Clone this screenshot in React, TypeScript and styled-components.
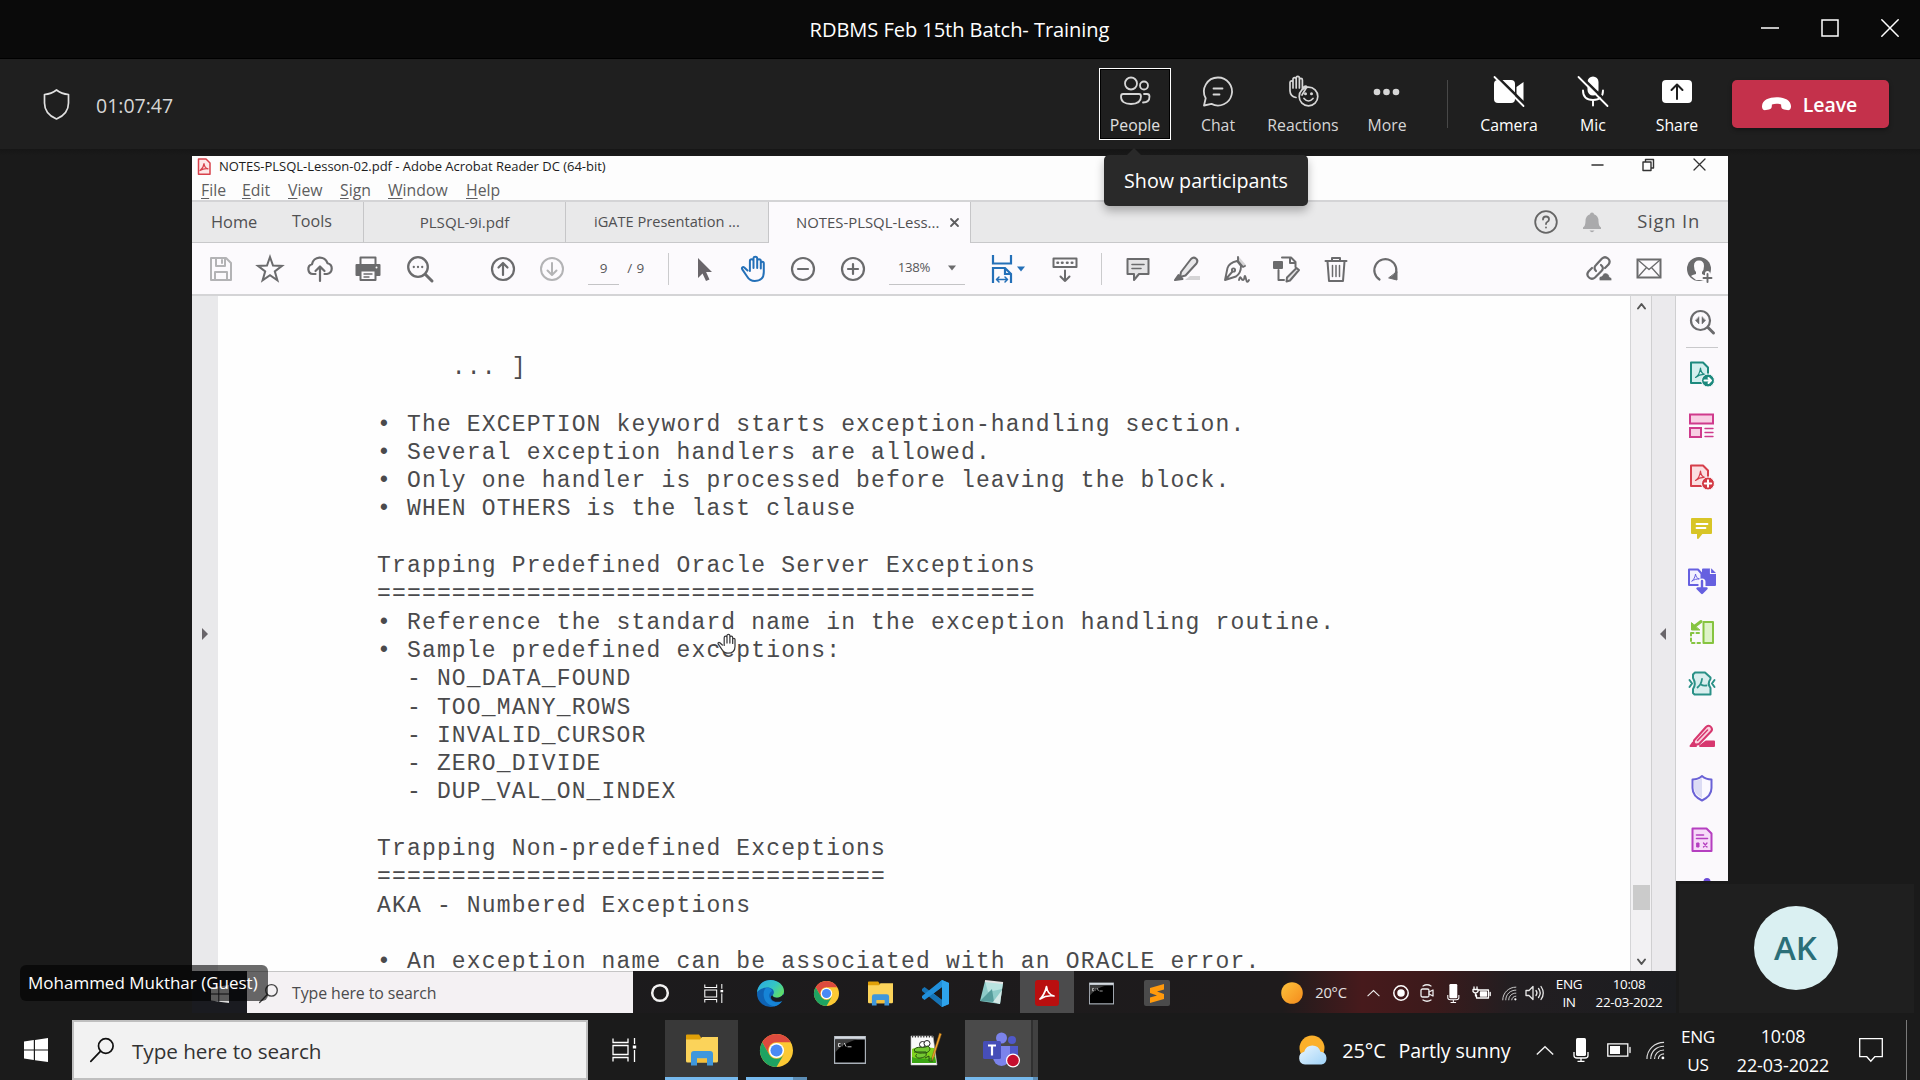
import React from "react";
import styled, { createGlobalStyle } from "styled-components";

const Global = createGlobalStyle`
  * { box-sizing: border-box; }
  html, body { margin: 0; padding: 0; background: #1a1a1a; overflow: hidden; }
  body { font-family: "Open Sans", "Noto Sans", sans-serif; }
  svg { display: block; flex: none; overflow: visible; }
`;

const Screen = styled.div`
  position: relative;
  width: 1920px;
  height: 1080px;
  display: flex;
  flex-direction: column;
  background: #1a1a1a;
  overflow: hidden;
`;

const Txt = styled.span<{ $s: number; $c?: string; $ls?: number; $w?: number }>`
  font-size: ${(p) => p.$s}px;
  color: ${(p) => p.$c || "#fff"};
  letter-spacing: ${(p) => p.$ls || 0}px;
  font-weight: ${(p) => p.$w || 400};
  line-height: 1.2;
  white-space: pre;
`;

/* ---------- Meeting window ---------- */

const TitleBar = styled.header`
  flex: none;
  height: 59px;
  display: grid;
  grid-template-columns: 1fr auto 1fr;
  align-items: center;
  background: #0a0a0a;
  border-bottom: 1px solid #000;
  padding: 3px 21px 0 20px;
`;

const WindowButtons = styled.div`
  grid-column: 3;
  justify-self: end;
  display: flex;
  gap: 42px;
  margin-top: -6px;
`;

const MeetingBar = styled.div`
  flex: none;
  height: 90px;
  display: flex;
  align-items: center;
  background: #1f1f1f;
  padding: 0 31px 0 43px;
`;

const Timer = styled.div`
  display: flex;
  align-items: center;
  gap: 26px;
  flex: 1;
  span { padding-top: 3px; }
`;

const Action = styled.button<{ $w: number; $focus?: boolean }>`
  width: ${(p) => p.$w}px;
  height: 72px;
  display: flex;
  flex-direction: column;
  align-items: center;
  padding: ${(p) => (p.$focus ? "6px 0 0" : "7px 0 0")};
  gap: 9px;
  background: transparent;
  font-family: inherit;
  border: ${(p) => (p.$focus ? "1px solid #fff" : "0")};
  box-shadow: ${(p) => (p.$focus ? "inset 0 0 0 1px #000" : "none")};
`;

const BarDivider = styled.i`
  width: 1px;
  height: 48px;
  margin: 0 19px 0 14px;
  background: #484848;
`;

const LeaveButton = styled.button`
  width: 157px;
  height: 48px;
  margin-left: 13px;
  display: flex;
  align-items: center;
  justify-content: center;
  gap: 11px;
  padding: 0 3px 0 0;
  border: 0;
  border-radius: 5px;
  background: #c4314b;
  font-family: inherit;
  box-shadow: 0 2px 4px rgba(0, 0, 0, 0.35);
  span { padding-top: 2px; }
`;

const Tooltip = styled.div`
  position: absolute;
  left: 1104px;
  top: 155px;
  width: 204px;
  height: 51px;
  display: flex;
  align-items: center;
  justify-content: center;
  background: #292929;
  border-radius: 5px;
  box-shadow: 0 5px 10px rgba(0, 0, 0, 0.28);
  &::before {
    content: "";
    position: absolute;
    left: 23px;
    top: -7px;
    border: 7px solid transparent;
    border-top: 0;
    border-bottom-color: #292929;
  }
`;

const Stage = styled.main`
  flex: none;
  height: 871px;
  padding: 7px 192px 7px;
  background: linear-gradient(#161616, #1a1a1a 7px);
`;

const Shared = styled.section`
  width: 1536px;
  height: 857px;
  display: flex;
  flex-direction: column;
  background: #fdfdfd;
  overflow: hidden;
`;

const NameTag = styled.div`
  position: absolute;
  left: 20px;
  top: 965px;
  width: 248px;
  height: 36px;
  display: flex;
  align-items: center;
  padding-left: 8px;
  border-radius: 6px;
  background: rgba(0, 0, 0, 0.58);
`;

const SelfView = styled.aside`
  position: absolute;
  left: 1676px;
  top: 881px;
  width: 241px;
  height: 132px;
  padding: 3px 3px 0;
  background: #1a1a1a;
`;

const SelfTile = styled.div`
  height: 129px;
  display: flex;
  align-items: center;
  justify-content: center;
  padding: 0 2px 2px 0;
  background: #1f1f1f;
`;

const Avatar = styled.div`
  width: 84px;
  height: 84px;
  border-radius: 50%;
  display: flex;
  align-items: center;
  justify-content: center;
  background: #daf0f2;
`;

/* ---------- Acrobat window ---------- */

const AcroTitle = styled.div`
  flex: none;
  height: 22px;
  display: flex;
  align-items: center;
  padding: 0 22px 1px 5px;
  gap: 8px;
`;

const AcroWinButtons = styled.div`
  margin-left: auto;
  display: flex;
  align-items: center;
  gap: 38px;
  margin-top: -4px;
`;

const MenuBar = styled.nav`
  flex: none;
  height: 24px;
  display: flex;
  align-items: center;
  padding: 2px 0 0 9px;
  border-bottom: 2px solid #d4d4d6;
  margin-bottom: 0;
`;

const MenuItem = styled.span<{ $w: number }>`
  width: ${(p) => p.$w}px;
  font-size: 15.8px;
  color: #5e5e60;
  line-height: 20px;
  &::first-letter { text-decoration: underline; text-underline-offset: 2px; }
`;

const TabStrip = styled.div`
  flex: none;
  height: 41px;
  display: flex;
  background: #e9e9ea;
`;

const Tab = styled.div<{ $w: number; $active?: boolean; $pad?: number; $plain?: boolean }>`
  width: ${(p) => p.$w}px;
  display: flex;
  align-items: center;
  justify-content: ${(p) => (p.$pad !== undefined ? "flex-start" : "center")};
  padding-left: ${(p) => p.$pad || 0}px;
  background: ${(p) => (p.$active ? "#fcfafd" : "transparent")};
  border-right: ${(p) => (p.$plain ? "0" : "1px solid #c6c6c8")};
  border-bottom: ${(p) => (p.$active ? "0" : "1px solid #c8c8ca")};
`;

const TabFill = styled.div`
  flex: 1;
  display: flex;
  align-items: center;
  justify-content: flex-end;
  padding: 0 28px 1px 0;
  border-bottom: 1px solid #c8c8ca;
`;

const SignIn = styled(Txt)`
  margin-left: 31px;
`;

const ToolBar = styled.div`
  flex: none;
  height: 53px;
  display: flex;
  align-items: center;
  background: #fcfafd;
  border-bottom: 2px solid #d4d4d6;
`;

const Tool = styled.span<{ $ml: number; $w?: number }>`
  flex: none;
  width: ${(p) => p.$w || 28}px;
  height: 28px;
  margin-left: ${(p) => p.$ml}px;
  display: flex;
  align-items: center;
  justify-content: center;
`;

const Field = styled.span<{ $ml: number; $w: number }>`
  flex: none;
  width: ${(p) => p.$w}px;
  height: 32px;
  margin-left: ${(p) => p.$ml}px;
  display: flex;
  align-items: center;
  justify-content: center;
  gap: 18px;
  border-bottom: 1px solid #c4c4c6;
`;

const ToolDivider = styled.i<{ $ml: number }>`
  flex: none;
  width: 1px;
  height: 32px;
  margin-left: ${(p) => p.$ml}px;
  background: #cbcbcd;
`;

const Body = styled.div`
  flex: 1;
  min-height: 0;
  display: flex;
`;

const LeftRail = styled.div`
  width: 26px;
  display: flex;
  align-items: center;
  justify-content: center;
  background: #e9e9eb;
`;

const Page = styled.div`
  position: relative;
  flex: 1;
  background: #fefefe;
  padding: 58px 0 0 159px;
  overflow: hidden;
`;

const Line = styled.div`
  height: 28.3px;
  line-height: 28.3px;
  white-space: pre;
  font-family: "Liberation Mono", monospace;
  font-size: 23px;
  letter-spacing: 1.17px;
  color: #4a4a4c;
  &:last-of-type { height: 28px; }
`;

const LastLine = styled(Line)`
  height: 20px;
  line-height: 20px;
  margin-top: 4px;
  &:last-of-type { height: 20px; }
`;

const HandCursor = styled.aside`
  position: absolute;
  left: 499px;
  top: 337px;
`;

const ScrollBar = styled.div`
  width: 22px;
  display: flex;
  flex-direction: column;
  align-items: center;
  padding: 6px 0 5px;
  background: #f2f1f3;
  border-left: 1px solid #d5d5d7;
  border-right: 1px solid #cfcfd1;
`;

const Thumb = styled.i`
  width: 17px;
  height: 25px;
  margin-top: auto;
  margin-bottom: 48px;
  background: #cbcbcb;
`;

const RightRail = styled.div`
  width: 24px;
  display: flex;
  align-items: center;
  justify-content: center;
  padding-right: 2px;
  background: #ebeaed;
  border-right: 1px solid #cfcfd1;
`;

const SidePane = styled.div`
  width: 52px;
  display: flex;
  flex-direction: column;
  align-items: center;
  background: #fbf9fc;
`;

const SideCell = styled.div<{ $first?: boolean }>`
  flex: none;
  width: 32px;
  height: ${(p) => (p.$first ? 52 : 51.75)}px;
  display: flex;
  align-items: center;
  justify-content: center;
  border-bottom: ${(p) => (p.$first ? "1px solid #c9c9cb" : "0")};
`;

/* ---------- Task bars ---------- */

const InnerBar = styled.div`
  flex: none;
  height: 42px;
  display: flex;
  align-items: center;
  background: linear-gradient(90deg, #1b1b1d 0, #1e1b1c 1090px, #471a1c 1170px, #3c1a1b 1240px, #221e21 1320px, #1c1d20 1484px);
  & > div + div { padding-top: 2px; }
`;

const InnerStart = styled.div`
  width: 55px;
  height: 42px;
  padding: 14px 0 0 19px;
  background: #1a1b20;
`;

const InnerSearch = styled.div`
  width: 386px;
  height: 42px;
  display: flex;
  align-items: center;
  gap: 14px;
  padding-left: 12px;
  background: #f4f1f3;
  border-top: 1px solid #c5c5c5;
`;

const Slot = styled.div<{ $w: number; $bg?: string; $ml?: number }>`
  position: relative;
  flex: none;
  width: ${(p) => p.$w}px;
  height: 100%;
  margin-left: ${(p) => p.$ml || 0}px;
  display: flex;
  align-items: center;
  justify-content: center;
  background: ${(p) => p.$bg || "transparent"};
`;

const Stack = styled(Slot)<{ $gap: number }>`
  flex-direction: column;
  gap: ${(p) => p.$gap}px;
`;

const TaskBar = styled.footer`
  flex: none;
  height: 60px;
  display: flex;
  align-items: center;
  background: #1b1b1b;
  span { padding-top: 2px; }
`;

const SearchBox = styled.div`
  width: 516px;
  height: 60px;
  display: flex;
  align-items: center;
  gap: 18px;
  padding-left: 16px;
  background: #f2f2f2;
  border: 2px solid #bfbfbf;
`;

const Underline = styled.i<{ $dim?: number }>`
  position: absolute;
  left: 0;
  right: 0;
  bottom: 0;
  height: 3px;
  background: linear-gradient(90deg, #76b9ed calc(100% - ${(p) => p.$dim || 0}px), #5c8db5 0);
`;

const EdgeLine = styled.i`
  width: 1px;
  height: 60px;
  background: #7a7a7a;
`;

/* ---------- Icons ---------- */

type IcoProps = { w?: number; h?: number; vb?: string; c?: string; sw?: number; fill?: string; children: React.ReactNode };
const Ico = ({ w = 28, h, vb, c = "#6b6b6d", sw = 2, fill = "none", children }: IcoProps) => (
  <svg width={w} height={h ?? w} viewBox={vb ?? `0 0 ${w} ${h ?? w}`} fill={fill} stroke={c} strokeWidth={sw} strokeLinejoin="round" strokeLinecap="round">
    {children}
  </svg>
);

const WinLogo = ({ w, c = "#fff" }: { w: number; c?: string }) => (
  <svg width={w} height={w} viewBox="0 0 24 24" fill={c}>
    <path d="M0 3.4 9.8 2v9.4H0zM11 1.9 24 0v11.4H11zM0 12.5h9.8V22L0 20.6zM11 12.5h13V24l-13-1.8z" />
  </svg>
);

const Magnifier = ({ w, c }: { w: number; c: string }) => (
  <Ico w={w} vb="0 0 24 24" c={c} sw={1.7}>
    <circle cx="15.8" cy="8" r="7.3" />
    <path d="M10.6 13.2 0.8 23.4" />
  </Ico>
);

const TaskView = ({ w }: { w: number }) => (
  <svg width={w} height={w} viewBox="0 0 24 24" fill="none" stroke="#fff" strokeWidth="1.3">
    <path d="M1 0.5v4h15v-4M1 23.5v-4h15v4M1 7.5h15v9H1zM22.5 0v6M22.5 12v12" />
    <path d="M20.8 7.5h3.4v3h-3.4z" fill="#fff" stroke="none" />
  </svg>
);

const Folder = ({ w }: { w: number }) => (
  <svg width={w} height={w} viewBox="0 0 32 32">
    <path d="M0 1.5a1 1 0 0 1 1-1h12l2 3v6H0z" fill="#e0a008" />
    <path d="M0 5.5h14l2-2.5h16v24a1.5 1.5 0 0 1-1.5 1.5h-29A1.5 1.5 0 0 1 0 27z" fill="#fbd35a" />
    <path d="M5 31.500V20a3 3 0 0 1 3-3h16a3 3 0 0 1 3 3V31.500h-6v-7H11v7z" fill="#3f97dc" />
    <path d="M11 24.500h10v4H11z" fill="#f5bf3a" />
  </svg>
);

const Chrome = ({ w }: { w: number }) => (
  <svg width={w} height={w} viewBox="0 0 48 48">
    <circle cx="24" cy="24" r="24" fill="#fcc934" />
    <path d="M3.200 12A24 24 0 0 1 44.800 12H24a12 12 0 0 0-10.400 18z" fill="#dd4b3e" />
    <path d="M3.200 12A24 24 0 0 0 24 48L34.400 30a12 12 0 0 1-20.800 0z" fill="#1ea362" />
    <circle cx="24" cy="24" r="11" fill="#fff" />
    <circle cx="24" cy="24" r="8.800" fill="#4a8af4" />
  </svg>
);

const Terminal = ({ w }: { w: number }) => (
  <svg width={w} height={w} viewBox="0 0 32 32">
    <path d="M0 2h32v28H0z" fill="#a9b0b8" />
    <path d="M1.200 5.500h29.600v23H1.200z" fill="#000" />
    <path d="M1.200 5.500h22c-9 2-16 6-22 13z" fill="#3c3c3c" />
    <path d="M1 2.500h30v2H1z" fill="#d5dae0" />
    <path d="M6.500 9.500h-2v3h2M8.300 9.800v.5M8.300 11.700v.5M10.300 9l1.800 3.600M13.500 12.800h4" stroke="#ddd" strokeWidth=".9" fill="none" />
  </svg>
);

const Edge = () => (
  <svg width="27" height="27" viewBox="0 0 32 32">
    <defs>
      <linearGradient id="eg1" x1="0" y1="0" x2="1" y2=".6"><stop offset="0" stopColor="#2ba7e8" /><stop offset=".6" stopColor="#34c6c4" /><stop offset="1" stopColor="#5fdd6b" /></linearGradient>
    </defs>
    <circle cx="16" cy="16" r="16" fill="#0f63b4" />
    <path d="M0 15C1 5 8 0 16 0c9 0 16 6 16 13 0 5-4 8-8.500 8-3 0-5-1-5-2.500 0-1 1.500-1.500 1.500-4C20 11 16 9 12 9 6 9 1 12 0 15z" fill="url(#eg1)" />
    <path d="M12 9c-7 2-6 21 9 22 4-.5 7-3 9-6-4 2-10 2-13-1-4-4-3-9 1-11-1-2-3-4-6-4z" fill="#1684d6" />
    <path d="M18.500 18.500c0 1.500 2 2.500 5 2.500 3 0 6-1.500 7.500-4l1.500 1.500c0 3-1.500 4.500-2.500 6-5 2.500-11 1.500-13-2-1-2-.5-4 1.500-4z" fill="#1a1c20" />
  </svg>
);

const VSCode = () => (
  <svg width="28" height="27" viewBox="0 0 28 27">
    <path d="M20 0l7 3v21l-7 3L5 13.500z" fill="#1f8ad2" />
    <path d="M20 7v13l-8.500-6.500z" fill="#1b1b1d" />
    <path d="M20 0l7 3v21l-7 3z" fill="#2ea3ec" />
    <path d="M0 9l2.500-2L20 20v7L0 11z" fill="#1673b5" />
    <path d="M0 18l2.500 2L20 7V0L0 16z" fill="#2190dc" />
  </svg>
);

const NotepadSm = () => (
  <svg width="26" height="26" viewBox="0 0 26 26">
    <path d="M7 1l18 2-3 21-20-3z" fill="#8ecbc8" />
    <path d="M7 1l18 2-1 6-14 3z" fill="#b9e3e0" />
    <path d="M2 21l12-12 2 13z" fill="#569d9c" />
    <path d="M7 1l18 2" stroke="#e4e4e4" strokeWidth="2" />
    <path d="M15 22l7 2 2-14z" fill="#d3e8e6" />
  </svg>
);

const AcrobatApp = () => (
  <svg width="24" height="26" viewBox="0 0 24 26">
    <rect width="24" height="26" rx="3" fill="#b90f0f" />
    <path d="M5 19c2-1.500 5.500-7 6.500-12.500 .5 5 3.500 8.500 7.500 9.500-5.500-.8-10 .5-14 3z" fill="none" stroke="#fff" strokeWidth="1.700" strokeLinejoin="round" />
  </svg>
);

const Sublime = () => (
  <svg width="26" height="26" viewBox="0 0 26 26">
    <rect width="26" height="26" rx="2" fill="#4b4b4b" />
    <path d="M6 8l14-4v5.500l-7 2 7 2.500v5L6 23v-5.500l7-2-7-2.500z" fill="#ff9a0c" />
  </svg>
);

const NotepadPP = () => (
  <svg width="34" height="36" viewBox="0 0 34 34">
    <path d="M2 3h22l4 29H2z" fill="#fafafa" stroke="#bbb" strokeWidth=".6" />
    <path d="M3 16c8-3 16-1 22-1l2 14H3z" fill="#7fd21c" />
    <path d="M3 24c8 3 16 1 23 0l1 6H3z" fill="#3ba514" />
    <path d="M3 3.500h21" stroke="#333" strokeWidth="2" strokeDasharray="1.200 1.600" />
    <circle cx="13.500" cy="11.500" r="3" fill="#fff" stroke="#222" />
    <circle cx="18" cy="10.500" r="3" fill="#fff" stroke="#222" />
    <path d="M5 17c3-5 9-1 14-4 4 3 1 7-4 7-4 0-7 1-10-3zM8 21c-3 2 0 5 4 4s6-2 5-5M16 25l4-2v5h4M5 19h12" fill="#74c832" stroke="#244a10" />
    <path d="M32.500 1l-8 24-1.500 3 0-4L30.500 0z" fill="#f7a62b" stroke="#7a5318" strokeWidth=".5" />
  </svg>
);

const Teams = () => (
  <svg width="38" height="38" viewBox="0 0 38 36">
    <circle cx="29" cy="8" r="4" fill="#5059c9" />
    <path d="M24 14h11v10a6 6 0 0 1-11 3z" fill="#5059c9" />
    <circle cx="18.500" cy="6" r="5.500" fill="#7b83eb" />
    <path d="M10 14h17v11a8.500 9 0 0 1-17 0z" fill="#7b83eb" />
    <rect x="0" y="9" width="18" height="18" rx="1.500" fill="#464eb8" />
    <path d="M5 13.500h8M9 13.500v10" stroke="#fff" strokeWidth="2.200" />
    <circle cx="30" cy="28.500" r="7" fill="#fff" />
    <circle cx="30" cy="28.500" r="5.800" fill="#c50f2e" />
  </svg>
);

const Wifi = ({ w }: { w: number }) => (
  <svg width={w} height={w} viewBox="0 0 20 20" fill="none" stroke="#ddd" strokeWidth="1.200">
    <path d="M1 19C1 9 9 1.500 19 1.500M5 19C5 11 11 5.500 19 5.500M9 19c0-5.500 4-9.500 10-9.500M13 19c0-3 2.500-5.500 6-5.500" />
    <circle cx="17.800" cy="17.800" r="1.500" fill="#fff" stroke="none" />
  </svg>
);

const Chevron = ({ w }: { w: number }) => (
  <svg width={w} height={w / 2} viewBox="0 0 18 9" fill="none" stroke="#eee" strokeWidth="1.500">
    <path d="M.8 8.500 9 .8l8.200 7.700" />
  </svg>
);

const MicTray = ({ h }: { h: number }) => (
  <svg width={(h * 16) / 24} height={h} viewBox="0 0 16 24" fill="none" stroke="#fff" strokeWidth="1.300">
    <rect x="3" y="0" width="10" height="18" rx="1.500" fill="#fff" stroke="none" />
    <path d="M1 14v3.500q0 2.500 3 2.500h8q3 0 3-2.500V14M8 20v3M4.500 23.300h7" />
  </svg>
);

const PdfGlyph = ({ c }: { c: string }) => <path d="M7.500 17.500c2.500-1.500 4.500-5.500 5-9.500 .3 4 2 6 4.500 6.500-3.500-.4-6.500.6-9.500 3z" stroke={c} strokeWidth="1.200" fill="none" />;

const PhoneDown = () => (
  <svg width="31" height="14" viewBox="0 0 31 14" fill="#fff">
    <path d="M1 9C1.500 3 8 .3 15.500.3S29.500 3 30 9c.2 3-1.300 4.600-4 4.100l-3-.6c-1.800-.4-2.700-1.400-2.800-3.200l-.1-1.800c-3-1-6.200-1-9.200 0l-.1 1.800c-.1 1.800-1 2.800-2.800 3.200l-3 .6C2.300 13.600.8 12 1 9z" />
  </svg>
);

const HandPath = "M6.500 15.500 3.300 12.600c-1.500-1.400-3 .3-2 1.800l5 7.300c1.500 2.600 4 4.300 7.500 4.300 6 0 9-3.500 9-9V8.500c0-2.300-3-2.300-3 0V6c0-2.500-3.600-2.500-3.600 0V3.500c0-2.500-3.700-2.500-3.700 0V6c0-2.500-3.600-2.500-3.600 0v9M12.500 6v7M16.200 6v7M19.800 8.500v5M8.900 6v10";

const dim = "#b3b3b5";

const docLines = [
  "     ... ]",
  "",
  "• The EXCEPTION keyword starts exception-handling section.",
  "• Several exception handlers are allowed.",
  "• Only one handler is processed before leaving the block.",
  "• WHEN OTHERS is the last clause",
  "",
  "Trapping Predefined Oracle Server Exceptions",
  "============================================",
  "• Reference the standard name in the exception handling routine.",
  "• Sample predefined exceptions:",
  "  - NO_DATA_FOUND",
  "  - TOO_MANY_ROWS",
  "  - INVALID_CURSOR",
  "  - ZERO_DIVIDE",
  "  - DUP_VAL_ON_INDEX",
  "",
  "Trapping Non-predefined Exceptions",
  "==================================",
  "AKA - Numbered Exceptions",
  "",
];

const sideIcons: React.ReactNode[] = [
  <Ico c="#1d8a7e" key="export">
    <path d="M3 2.500h12l5 5V23H3z" fill="#d3efee" stroke="#1d8a7e" /><PdfGlyph c="#1d8a7e" />
    <circle cx="20" cy="20.500" r="6.500" fill="#1d8a7e" stroke="#fbf9fc" strokeWidth="1" /><path d="M16.500 20.500h6M20.500 18l2.500 2.500-2.500 2.500" stroke="#fff" />
  </Ico>,
  <Ico c="#cf3b8c" key="organize">
    <path d="M2 2.500h23v9H2zM2 16h11v9H2z" fill="#f8cfe4" strokeLinejoin="miter" /><path d="M17 16.500h8M17 20.500h8M17 24.500h8" strokeWidth="1.400" />
  </Ico>,
  <Ico c="#d63f4b" key="create">
    <path d="M3 2.500h12l5 5V23H3z" fill="#fbdfe1" /><PdfGlyph c="#d63f4b" />
    <circle cx="20" cy="20.500" r="6.500" fill="#d33a44" stroke="#fbf9fc" strokeWidth="1" /><path d="M16.800 20.500h6.400M20 17.300v6.400" stroke="#fff" />
  </Ico>,
  <Ico c="#d8c527" key="comment">
    <path d="M4 4h19v14H14l-4 5v-5H4z" fill="#d8c527" /><path d="M8.500 9h11M8.500 13h9" stroke="#fff" strokeWidth="1.800" />
  </Ico>,
  <Ico c="#6660e0" key="combine">
    <path d="M1 2.500h9l3.500 4V18H1z" fill="#f2f1ff" /><path d="M15 2.500h8l4 4V18H15z" fill="#6660e0" /><path d="M22.500 1.500v5h5" stroke="#fbf9fc" strokeWidth="1.200" />
    <path d="M4 14c2-1.500 3-4 3.500-7 .5 3 1.500 4.500 4 5-3-.2-5 .5-7.500 2z" strokeWidth="1" />
    <path d="M14 15v8" stroke="#fbf9fc" strokeWidth="7" /><path d="M14 14v9M9.500 21.500h9L14 26z" fill="#6660e0" strokeWidth="2.400" />
  </Ico>,
  <Ico c="#86c440" key="rotate">
    <path d="M15.500 3h9.500v21H15.500z" fill="#def3c8" /><path d="M3 14h9M3 14v10h9" strokeDasharray="2.500 3" /><path d="M13 2.500 5 8.500" strokeWidth="3" /><path d="M3.500 4v7h8z" fill="#86c440" strokeWidth="1" />
  </Ico>,
  <Ico c="#2a9187" key="compress">
    <path d="M5 8V4.500l2-2H17l5.500 5V9q-3.500 4.500 0 9v6.500H6.500L5 23v-4q3.500-5 0-11z" fill="#d9eeee" /><path d="M1.500 10l2.500 3.500L1.500 17M26.500 10 24 13.500l2.500 3.500" /><path d="M9.500 17.500c2.500-2 4-4.500 4.500-8.500M13 14.500q2 1.500 5.500 1" strokeWidth="1.800" />
  </Ico>,
  <Ico c="#d7386f" key="redact">
    <path d="M12 24h14v-4.500h-8z" fill="#d7386f" /><path d="M6 18.500 18 5q3-2.500 5 0t0 4.500L11 22q-6 2-5-3.500z" fill="#fbd3e0" /><path d="M9.500 18.500 19.500 8" strokeWidth="1.500" /><path d="M2.500 24 5 20.500 8 24z" fill="#d7386f" />
  </Ico>,
  <Ico c="#6a62d6" key="protect">
    <path d="M14 2q4 3.500 9.500 3.500V14q0 8-9.500 12.500Q4.500 22 4.500 14V5.500Q10 5.500 14 2z" fill="#fbf9ff" /><path d="M14 4v20Q6 20 6 14V7q5-.5 8-3z" fill="#dcdcf4" stroke="none" />
  </Ico>,
  <Ico c="#b53fc0" key="prepare">
    <path d="M4.500 2.500h14l5 5v17.500h-19z" fill="#f6dbf8" /><path d="M8.500 9h7M8.500 12.500h11" strokeWidth="1.600" /><path d="M9 17h2v4H9z" fill="#b53fc0" strokeWidth="1" /><path d="M15.500 17l3.500 4M19 17l-3.500 4" strokeWidth="1.300" />
  </Ico>,
  <Ico c="#6a4ad6" key="more">
    <circle cx="19" cy="4.500" r="2.500" fill="#6a4ad6" /><path d="M4 22 17 8" />
  </Ico>,
];

function MeetingWindow() {
  return (
    <>
      <TitleBar>
        <span />
        <Txt $s={20.1} $ls={-0.08}>RDBMS Feb 15th Batch- Training</Txt>
        <WindowButtons>
          <Ico w={18} c="#fff" sw={1.5}><path d="M0 9h18" strokeLinecap="butt" /></Ico>
          <Ico w={18} c="#fff" sw={1.500}><path d="M1 1h16v16H1z" strokeLinejoin="miter" /></Ico>
          <Ico w={18} c="#fff" sw={1.500}><path d="M.8.8l16.400 16.400M17.200.8.8 17.200" /></Ico>
        </WindowButtons>
      </TitleBar>
      <MeetingBar>
        <Timer>
          <Ico w={27} h={32} c="#e0e0e0" sw={1.700}>
            <path d="M13.500 2q5 4 12 4.500V15q0 11-12 16Q1.500 26 1.500 15V6.500q7-.5 12-4.500z" />
          </Ico>
          <Txt $s={19.500} $c="#d6d6d6">01:07:47</Txt>
        </Timer>
        <Action $w={72} $focus>
          <Ico w={32} c="#d6d6d6" sw={1.800}>
            <circle cx="12" cy="8.500" r="6" /><circle cx="25" cy="10.500" r="4" />
            <path d="M4 19h16q2 0 2 2.500 0 7.500-10 7.500T2 21.500Q2 19 4 19zM25 19h3q2.500 0 2.500 2.500 0 6-6.500 6" />
          </Ico>
          <Txt $s={15.800} $c="#e0e0e0">People</Txt>
        </Action>
        <Action $w={94}>
          <Ico w={32} c="#d6d6d6" sw={1.800}>
            <path d="M16 2.500a14 14 0 1 1-6.500 26.400L2 30.500l1.700-7.200A14 14 0 0 1 16 2.500zM11.500 13.500h9M11.500 19.500h6" />
          </Ico>
          <Txt $s={15.800} $c="#d6d6d6">Chat</Txt>
        </Action>
        <Action $w={76}>
          <Ico w={32} c="#d6d6d6" sw={1.700}>
            <path d="M3 16V7.500q0-1.700 1.500-1.700T6 7.500V4.300q0-1.700 1.600-1.700t1.600 1.700V3q0-1.600 1.600-1.600T12.400 3v2q0-1.600 1.500-1.600T15.400 5v9l2-2.500q1.500-1 2.500.3L15 20M3 16q.3 5.500 6 6.500M6 7v6M9.200 4.500V13M12.400 5v8" />
            <circle cx="21.500" cy="21.500" r="9.300" /><path d="M17 23.500q4.500 5 9 0" /><path d="M18.500 18.700v.1M24.500 18.700v.1" strokeWidth="3" />
          </Ico>
          <Txt $s={15.800} $c="#d6d6d6">Reactions</Txt>
        </Action>
        <Action $w={92}>
          <Ico w={32} c="none" fill="#d6d6d6"><circle cx="6" cy="17" r="3.300" /><circle cx="15.500" cy="17" r="3.300" /><circle cx="25" cy="17" r="3.300" /></Ico>
          <Txt $s={15.800} $c="#d6d6d6">More</Txt>
        </Action>
        <BarDivider />
        <Action $w={84}>
          <Ico w={32} c="#fff">
            <rect x="1" y="5" width="21" height="23" rx="4" fill="#fff" stroke="none" /><path d="M23.500 12 30.500 7v19l-7-5z" fill="#fff" stroke="none" />
            <path d="M4 1.500 32 29" stroke="#1f1f1f" strokeWidth="2.500" /><path d="M1.500 2 30.500 31" strokeWidth="1.800" />
          </Ico>
          <Txt $s={15.800}>Camera</Txt>
        </Action>
        <Action $w={84}>
          <Ico w={32} c="#fff">
            <rect x="10.500" y="1.500" width="11" height="19" rx="5.500" fill="#fff" stroke="none" />
            <path d="M6 15.500q0 9.500 10 9.500t10-9.500M16 25v5.500" strokeWidth="1.900" />
            <path d="M4 1.500 32 29" stroke="#1f1f1f" strokeWidth="2.500" /><path d="M1.500 2 30.500 31" strokeWidth="1.800" />
          </Ico>
          <Txt $s={15.800}>Mic</Txt>
        </Action>
        <Action $w={84}>
          <Ico w={32} c="#1f1f1f" sw={2}>
            <rect x="1" y="5" width="30" height="23" rx="4" fill="#fff" stroke="none" /><path d="M16 24V10M10.500 15 16 9.500l5.500 5.500" />
          </Ico>
          <Txt $s={15.800}>Share</Txt>
        </Action>
        <LeaveButton><PhoneDown /><Txt $s={19.500} $w={600} $ls={-0.1}>Leave</Txt></LeaveButton>
      </MeetingBar>
    </>
  );
}

function AcrobatWindow() {
  return (
    <>
      <AcroTitle>
        <Ico w={14} h={17} c="#d8414b" sw={1.500}>
          <path d="M1.500 1H9l4 4v11.200H1.500z" fill="#fde8e8" /><path d="M3 12.500Q6.500 10 7 5.500q.5 4.500 4 5.300-4-.6-8 1.700z" strokeWidth="1.200" />
        </Ico>
        <Txt $s={13} $c="#1c1c1c" $ls={-0.02}>NOTES-PLSQL-Lesson-02.pdf - Adobe Acrobat Reader DC (64-bit)</Txt>
        <AcroWinButtons>
          <Ico w={13} c="#333" sw={1.500}><path d="M1 7h11" /></Ico>
          <Ico w={13} c="#333" sw={1.400}><path d="M1 4h8v8.500H1zM3.500 4V1.500h8V10H9" /></Ico>
          <Ico w={13} c="#333" sw={1.300}><path d="M1 1l11 11M12 1 1 12" /></Ico>
        </AcroWinButtons>
      </AcroTitle>
      <MenuBar>
        {([["File", 41], ["Edit", 46], ["View", 52], ["Sign", 48], ["Window", 78], ["Help", 60]] as [string, number][]).map(([t, w]) => (
          <MenuItem key={t} $w={w}>{t}</MenuItem>
        ))}
      </MenuBar>
      <TabStrip>
        <Tab $w={97} $pad={19} $plain><Txt $s={16.400} $c="#505052">Home</Txt></Tab>
        <Tab $w={75} $pad={3}><Txt $s={16.100} $c="#505052">Tools</Txt></Tab>
        <Tab $w={202}><Txt $s={15.100} $c="#505052">PLSQL-9i.pdf</Txt></Tab>
        <Tab $w={203} $pad={28}><Txt $s={14.600} $c="#505052">iGATE Presentation ...</Txt></Tab>
        <Tab $w={202} $active $pad={27}>
          <Txt $s={14.900} $c="#505052">NOTES-PLSQL-Less...</Txt>
          <Tool $ml={6} $w={19}><Ico w={9} c="#5c5c5e" sw={1.800}><path d="M1 1l7 7M8 1 1 8" /></Ico></Tool>
        </Tab>
        <TabFill>
          <Ico w={24} c="#666" sw={1.800}><circle cx="12" cy="12" r="10.800" /><path d="M9 9.500q0-3 3-3t3 2.800q0 1.700-1.500 2.400T12 14M12 17.400v.1" /></Ico>
          <Tool $ml={20} $w={28}><Ico w={20} h={22} c="none" fill="#aaaaac"><path d="M10 1.500q2 0 2 1.800 4.500 1.300 4.500 7 0 4.700 2.500 6.200v1.500H1v-1.500Q3.500 15 3.500 10.300q0-5.700 4.500-7Q8 1.500 10 1.500zM7.500 19.500h5q-2.500 3.500-5 0z" /></Ico></Tool>
          <SignIn $s={18.400} $c="#505052" $ls={0.8}>Sign In</SignIn>
        </TabFill>
      </TabStrip>
      <ToolBar>
        <Tool $ml={15}><Ico c={dim}><path d="M4 3h15l5 5v17H4zM9 3v8h9V3M8 25v-8h12v8M15 5v3" /></Ico></Tool>
        <Tool $ml={21}><Ico><path d="M14 2l3 8.600 9 .3-7.200 5.500 2.600 9-7.400-5.200-7.400 5.200 2.600-9L2 10.900l9-.3z" strokeLinejoin="miter" /></Ico></Tool>
        <Tool $ml={22}><Ico sw={2.200}><path d="M9.500 19H7a5 5 0 0 1-1-9.800 8 8 0 0 1 15.500-1A5.500 5.500 0 0 1 21 19h-2.500M14 26V12M9.500 16l4.500-4.500 4.500 4.500" /></Ico></Tool>
        <Tool $ml={20}><Ico><path d="M6.500 10V2.500h15V10" fill="#fcfafd" /><path d="M2.500 10h23v10h-23z" fill="#6b6b6d" /><path d="M6.500 15.500h15v9.500h-15z" fill="#fcfafd" /><path d="M10 19h8M10 22h5" strokeWidth="1.400" /><path d="M22.500 12.500v.1" stroke="#fff" /></Ico></Tool>
        <Tool $ml={24}><Ico sw={2.300}><circle cx="12" cy="12" r="9.800" /><path d="M19.500 19.500 26 26" strokeWidth="3" /><path d="M7.800 12v.1M12 12v.1M16.200 12v.1" /></Ico></Tool>
        <Tool $ml={55}><Ico sw={2.200}><circle cx="14" cy="14" r="11" /><path d="M14 20V8.500M9.500 12.500 14 8l4.500 4.500" /></Ico></Tool>
        <Tool $ml={21}><Ico c={dim}><circle cx="14" cy="14" r="11" /><path d="M14 8v11.500M9.500 15.500 14 20l4.500-4.500" /></Ico></Tool>
        <Field $ml={22} $w={31}><Txt $s={13.500} $c="#58585a">9</Txt></Field>
        <Tool $ml={6} $w={22}><Txt $s={13.500} $c="#58585a" $ls={0.5}>/ 9</Txt></Tool>
        <ToolDivider $ml={21} />
        <Tool $ml={22}><Ico c="none" fill="#69656a"><path d="M7 3v20l4.500-4.500 3.500 7.500 3.500-1.600-3.400-7.400H21z" /></Ico></Tool>
        <Tool $ml={20}><Ico c="#2470b8"><path d={HandPath} transform="translate(2 0)" /></Ico></Tool>
        <Tool $ml={22}><Ico sw={2.200}><circle cx="14" cy="14" r="11" /><path d="M9 14h10" /></Ico></Tool>
        <Tool $ml={22}><Ico sw={2.200}><circle cx="14" cy="14" r="11" /><path d="M9 14h10M14 9v10" /></Ico></Tool>
        <Field $ml={22} $w={76}>
          <Txt $s={13.200} $c="#58585a" $ls={-0.3}>138%</Txt>
          <Ico w={8} h={6} c="none" fill="#6b6b6d"><path d="M0 .5h8L4 5.500z" /></Ico>
        </Field>
        <Tool $ml={23}><Ico c="#2470b8" sw={2.200}><path d="M5 0v8.500h18V0M5 28V13h12l6 6v9M17 13v6h6" strokeLinecap="butt" strokeLinejoin="miter" /><path d="M9 24.500h10M11 22l-2.500 2.500L11 27M17 22l2.500 2.500L17 27" strokeWidth="1.500" /></Ico></Tool>
        <Tool $ml={0} $w={10}><Ico w={8} h={6} c="none" fill="#2470b8"><path d="M0 .5h8L4 5.500z" /></Ico></Tool>
        <Tool $ml={25}><Ico><path d="M2.500 3.500h23v8.500h-23z" /><path d="M6.500 7.800h.5M11 7.800h.5M16 7.800h.5M20.800 7.800h.5" strokeWidth="2.600" /><path d="M14 15.500V26M9.500 21.500 14 26l4.500-4.500" /></Ico></Tool>
        <ToolDivider $ml={22} />
        <Tool $ml={22}><Ico><path d="M3.500 4h21v15H15l-5 6v-6H3.500z" fill="#e5e4e6" /><path d="M8 9.500h12M8 13.500h9" strokeWidth="1.600" /></Ico></Tool>
        <Tool $ml={21}><Ico><path d="M12 25h15v-4H17z" fill="#d5d4d6" stroke="none" /><path d="M8 17 18 4q2.500-2.500 5-.5t.5 5L12.500 20.500 7 22z" fill="#e8e7e9" /><path d="M2 25l3.500-5 4 4z" fill="#6b6b6d" /></Ico></Tool>
        <Tool $ml={21}><Ico sw={1.900}><path d="M17 2l7 8-3 2-6-7z" fill="#d5d4d6" stroke="none" /><path d="M15 6Q7 8 5.500 13L3 25l11-3.500Q19 18 19 11zM3.500 24.500l7-8M16 2v4l5 6 2-1" /><circle cx="11.500" cy="15" r="1.600" /><path d="M17 25q1-4 2-2t2 2 1.500-3 1.500 2 3 1" /></Ico></Tool>
        <Tool $ml={22}><Ico><path d="M10 2.500h9l4.500 4.500v5M6.500 15v10H12M18 2.500V8h5.500" /><path d="M2 7h8v6H2z" fill="#6b6b6d" /><path d="M24.500 13l2.500 2L18 25.500l-3.500 1 .5-4z" fill="#e5e4e6" /></Ico></Tool>
        <Tool $ml={22}><Ico><path d="M3.500 6h21M10 6V3h8v3M5.500 6.500 7 26h14l1.500-19.500" /><path d="M10.500 10.500v11M14 10.500v11M17.500 10.500v11" strokeWidth="1.500" /></Ico></Tool>
        <Tool $ml={21}><Ico sw={2.200}><path d="M8.500 24.500A11 11 0 1 1 24 20.500" /><path d="M26 17v8l-8-2z" fill="#6b6b6d" strokeWidth="1" /></Ico></Tool>
        <Tool $ml={186}><Ico sw={2.200}><path d="M11 16q-3-3 0-6l6-6.500q3-2.500 6 0t.5 6L20 13M16 10q3.500 3 .5 6L10 22.500q-3 2.500-6 0t-.5-6L7 13" /><path d="M14.500 25.500q-1.500-4 2.500-4.500 2-5 6-2 1.500 1.500 1.500 3 3 .5 2 3.500z" fill="#6b6b6d" stroke="#fcfafd" strokeWidth=".5" /></Ico></Tool>
        <Tool $ml={22}><Ico><path d="M2.500 4.500h23v18h-23z" strokeLinejoin="miter" /><path d="M3 5l11 9.500L25 5M3 22l8.500-9.500M25 22l-8.500-9.500" strokeWidth="1.300" /></Ico></Tool>
        <Tool $ml={22}><Ico sw={2.200}><circle cx="14" cy="14" r="12" fill="#6b6b6d" stroke="none" /><path d="M14 5.500q5 0 5 5.500 0 4-2 6v2l4 2-4 4h-6l-5-4q1-1 5-2v-2q-2-2-2-6 0-5.500 5-5.500z" fill="#fcfafd" stroke="none" /><path d="M22.500 18.500v9M18 23h9" stroke="#fcfafd" strokeWidth="5" /><path d="M22.500 19v8M18.500 23h8" strokeWidth="1.900" /></Ico></Tool>
      </ToolBar>
      <Body>
        <LeftRail><Ico w={8} h={14} c="none" fill="#69656a"><path d="M1 1l6 6-6 6z" /></Ico></LeftRail>
        <Page>
          {docLines.map((l, i) => <Line key={i}>{l}</Line>)}
          <LastLine>• An exception name can be associated with an ORACLE error.</LastLine>
          <HandCursor>
            <Ico w={20} h={21} vb="0 0 25 27" c="#3a3a3c" sw={1.600}><path d={HandPath} fill="#fff" /></Ico>
          </HandCursor>
        </Page>
        <ScrollBar>
          <Ico w={9} h={8} c="#555" sw={2}><path d="M1 6.500 4.500 2 8 6.500" /></Ico>
          <Thumb />
          <Ico w={9} h={8} c="#555" sw={2}><path d="M1 1.500 4.500 6 8 1.500" /></Ico>
        </ScrollBar>
        <RightRail><Ico w={8} h={14} c="none" fill="#69656a"><path d="M7 1 1 7l6 6z" /></Ico></RightRail>
        <SidePane>
          <SideCell $first><Ico sw={2.200}><circle cx="12.500" cy="12.500" r="9.500" /><path d="M20 19.500 25.500 25" strokeWidth="3" /><path d="M11 9v7L7.500 12.500zM14 9v7l3.500-3.500z" fill="#6b6b6d" strokeWidth=".5" /></Ico></SideCell>
          {sideIcons.map((ic, i) => <SideCell key={i}>{ic}</SideCell>)}
        </SidePane>
      </Body>
    </>
  );
}

function InnerTaskbar() {
  return (
    <InnerBar>
      <InnerStart><WinLogo w={18} c="#d8d8d8" /></InnerStart>
      <InnerSearch><Magnifier w={19} c="#444" /><Txt $s={15.900} $c="#4b4b4d" $ls={-0.1}>Type here to search</Txt></InnerSearch>
      <Slot $w={53}><Ico w={18} c="#f2f2f2" sw={2.500}><circle cx="9" cy="9" r="7.800" /></Ico></Slot>
      <Slot $w={55}><TaskView w={19} /></Slot>
      <Slot $w={59}><Edge /></Slot>
      <Slot $w={53}><Chrome w={25} /></Slot>
      <Slot $w={55}><Folder w={25} /></Slot>
      <Slot $w={56}><VSCode /></Slot>
      <Slot $w={54}><NotepadSm /></Slot>
      <Slot $w={54} $bg="#4b4b4c" $ml={2}><AcrobatApp /></Slot>
      <Slot $w={55}><Terminal w={25} /></Slot>
      <Slot $w={56}><Sublime /></Slot>
      <Slot $w={24} $ml={95}><svg width="22" height="22" viewBox="0 0 22 22"><defs><linearGradient id="sun" x1="0" y1="0" x2="1" y2="1"><stop offset="0" stopColor="#fdc33c" /><stop offset="1" stopColor="#f48a1c" /></linearGradient></defs><circle cx="11" cy="11" r="10.800" fill="url(#sun)" /></svg></Slot>
      <Slot $w={54}><Txt $s={14.700} $c="#e4e0e0" $ls={-0.2}>20°C</Txt></Slot>
      <Slot $w={31}><Chevron w={13} /></Slot>
      <Slot $w={23}><Ico w={16} c="#fff" sw={1.500}><circle cx="8" cy="8" r="7.200" /><circle cx="8" cy="8" r="3" fill="#fff" /></Ico></Slot>
      <Slot $w={30}><Ico w={14} h={18} c="#eee" sw={1.300}><rect x="1" y="5" width="8" height="8" rx="1.500" /><path d="M9 8l4-2v6l-4-2M3 2q4-2.500 8 0M3 16q4 2.500 8 0" /></Ico></Slot>
      <Slot $w={23}><MicTray h={19} /></Slot>
      <Slot $w={32}><Ico w={19} h={14} c="#fff" sw={1.300}><path d="M6.500 4h10v8h-12V9M18.200 6.500v3" /><path d="M8.500 6h6v4h-6z" fill="#fff" /><path d="M1 3.500h5v2q-2.500 3-5 0zM2 1v2M5 1v2M3.500 7v3" /></Ico></Slot>
      <Slot $w={25}><Wifi w={15} /></Slot>
      <Slot $w={24}><Ico w={18} h={16} c="#e8e8e8" sw={1.300}><path d="M1 5.500h3l4-4v13l-4-4H1zM11 5.500q2 2.500 0 5M13.500 3.500q3.500 4.500 0 9M16 1.500q4.500 6.500 0 13" /></Ico></Slot>
      <Stack $w={46} $gap={2}><Txt $s={13.500} $ls={-0.4}>ENG</Txt><Txt $s={13.500} $ls={-0.4}>IN</Txt></Stack>
      <Stack $w={74} $gap={2}><Txt $s={13.400} $ls={-0.3}>10:08</Txt><Txt $s={13.400} $ls={-0.3}>22-03-2022</Txt></Stack>
    </InnerBar>
  );
}

function DesktopTaskbar() {
  return (
    <TaskBar>
      <Slot $w={72}><WinLogo w={24} /></Slot>
      <SearchBox><Magnifier w={24} c="#111" /><Txt $s={20.700} $c="#333" $ls={-0.05}>Type here to search</Txt></SearchBox>
      <Slot $w={71}><TaskView w={24} /></Slot>
      <Slot $w={73} $bg="#393939" $ml={6}><Folder w={32} /><Underline /></Slot>
      <Slot $w={61} $ml={8}><Chrome w={33} /><Underline $dim={14} /></Slot>
      <Slot $w={86}><Terminal w={32} /></Slot>
      <Slot $w={66}><NotepadPP /></Slot>
      <Slot $w={73} $ml={6} $bg="linear-gradient(90deg,#4a4a4a 66px,#303030 66px,#303030 68px,#414141 68px)"><Teams /><Underline $dim={5} /></Slot>
      <Slot $w={30} $ml={260}>
        <svg width="30" height="30" viewBox="0 0 30 30">
          <defs><linearGradient id="cl" x1="0" y1="0" x2="1" y2="1"><stop offset="0" stopColor="#eaf6ff" /><stop offset="1" stopColor="#9fd2f7" /></linearGradient></defs>
          <circle cx="14" cy="13" r="12.500" fill="#fbb02b" />
          <path d="M7 29.500a6.500 6.500 0 0 1-.8-12.800 8.500 8.500 0 0 1 16.300 0A6.500 6.500 0 0 1 23.500 29.500z" fill="url(#cl)" />
        </svg>
      </Slot>
      <Slot $w={44} $ml={14}><Txt $s={20} $ls={-0.1}>25°C</Txt></Slot>
      <Slot $w={111} $ml={13}><Txt $s={19.700} $ls={-0.1}>Partly sunny</Txt></Slot>
      <Slot $w={70}><Chevron w={18} /></Slot>
      <Slot $w={16} $ml={-7}><MicTray h={24} /></Slot>
      <Slot $w={24} $ml={18}><Ico w={24} h={14} c="#fff" sw={1.300}><path d="M.8.8h20v12.400H.8zM23 4.500v5" strokeLinejoin="miter" /><path d="M3 3h10v8H3z" fill="#fff" stroke="none" /></Ico></Slot>
      <Slot $w={20} $ml={14}><Wifi w={19} /></Slot>
      <Stack $w={66} $gap={5}><Txt $s={17.200} $ls={-0.3}>ENG</Txt><Txt $s={17.200} $ls={-0.3}>US</Txt></Stack>
      <Stack $w={104} $gap={5}><Txt $s={17.900} $ls={-0.2}>10:08</Txt><Txt $s={17.900} $ls={-0.1}>22-03-2022</Txt></Stack>
      <Slot $w={71}><Ico w={24} c="#fff" sw={1.300}><path d="M.7.700h22.600v18h-7.500l-4 4.500-4-4.500H.7z" strokeLinejoin="miter" /></Ico></Slot>
      <EdgeLine />
    </TaskBar>
  );
}

export default function App() {
  return (
    <Screen>
      <Global />
      <MeetingWindow />
      <Stage>
        <Shared>
          <AcrobatWindow />
          <InnerTaskbar />
        </Shared>
      </Stage>
      <DesktopTaskbar />
      <Tooltip><Txt $s={19.700}>Show participants</Txt></Tooltip>
      <SelfView><SelfTile><Avatar><Txt $s={33} $w={600} $c="#2b6f78">AK</Txt></Avatar></SelfTile></SelfView>
      <NameTag><Txt $s={17}>Mohammed Mukthar (Guest)</Txt></NameTag>
    </Screen>
  );
}
